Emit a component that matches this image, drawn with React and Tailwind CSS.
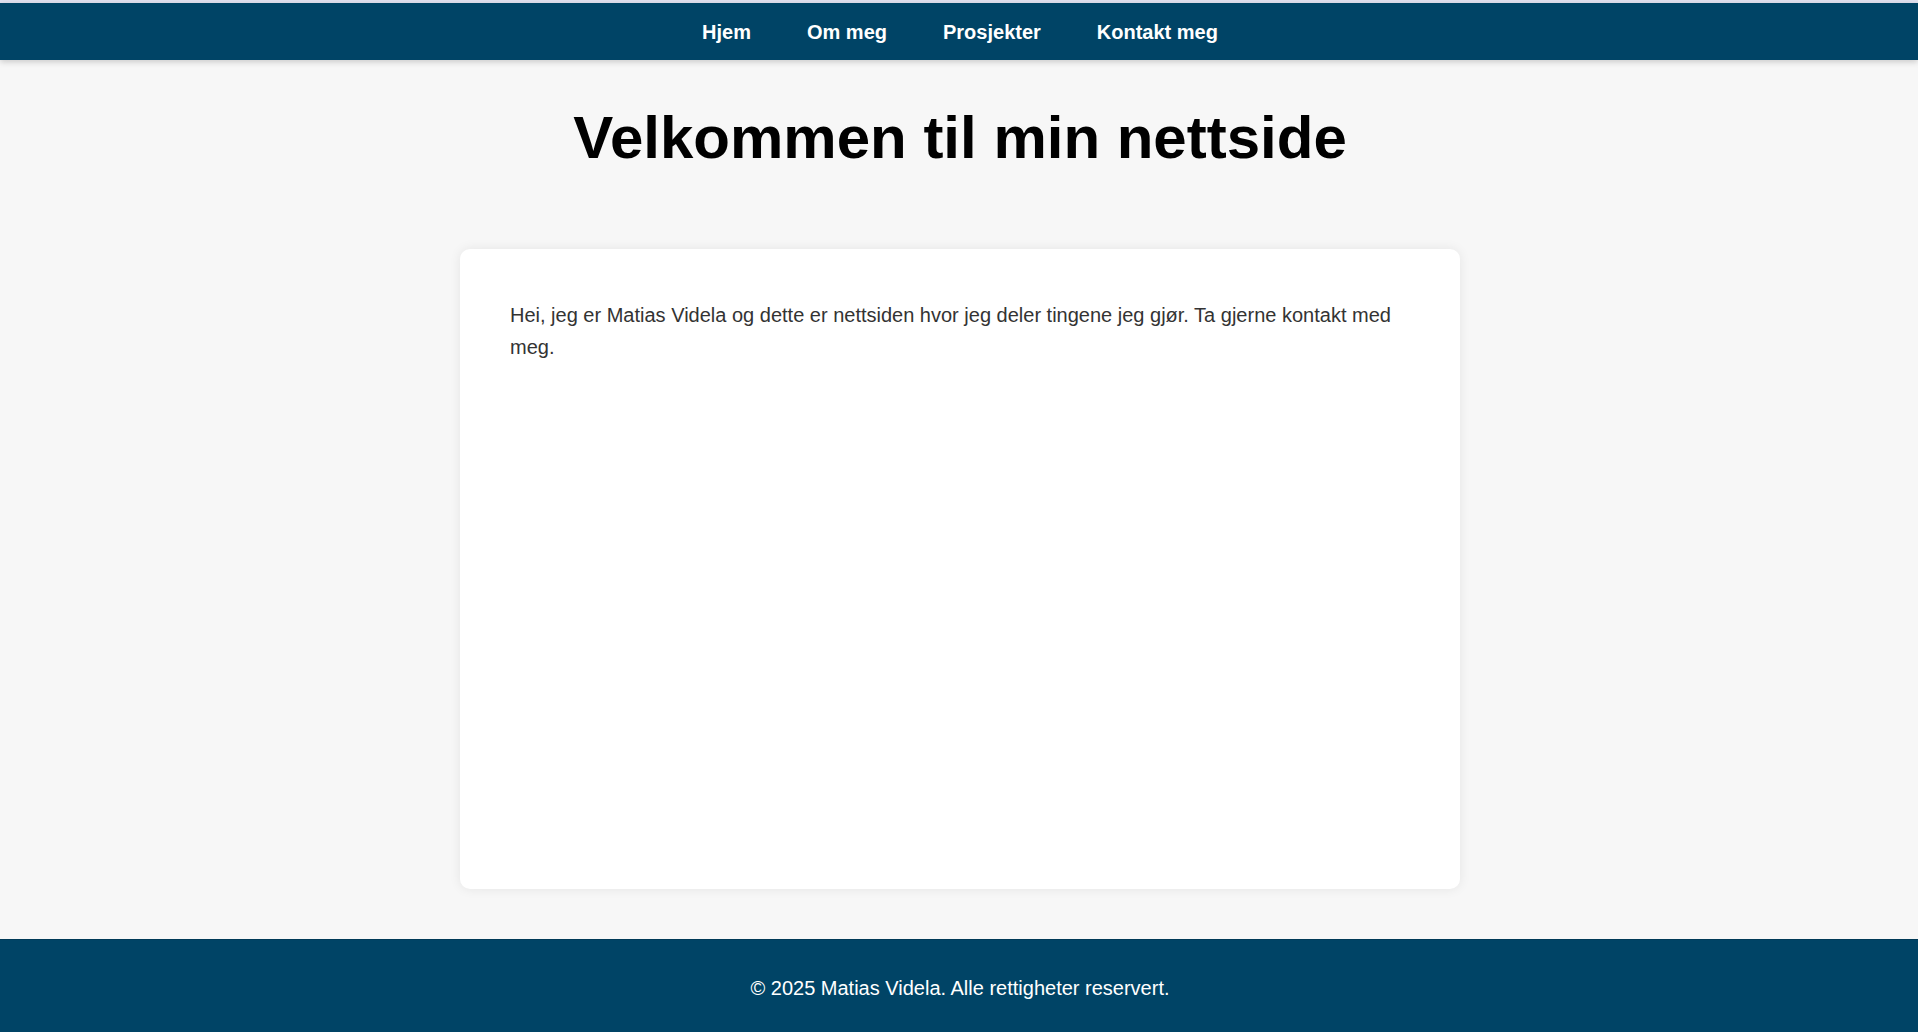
import React from "react";

export default function App() {
  const links = ["Hjem", "Om meg", "Prosjekter", "Kontakt meg"];
  return (
    <div
      className="min-h-[1032px] h-[1032px] overflow-hidden flex flex-col bg-[#f7f7f7]"
      style={{ fontFamily: '"Liberation Sans", Arial, sans-serif' }}
    >
      <div className="h-[3px] bg-[#e1e1ef]" />
      <nav className="relative z-10 h-[57px] pl-[2px] bg-[#004466] shadow-[0_2px_6px_rgba(0,0,0,0.18)] flex items-center justify-center gap-[56px]">
        {links.map((l) => (
          <a key={l} href="#" className="text-white font-bold text-[20px] leading-[24px] no-underline">
            {l}
          </a>
        ))}
      </nav>
      <main className="flex-1 flex flex-col items-center pl-[2px]">
        <h1 className="mt-[42px] text-[60px] leading-[72px] font-bold text-black">
          Velkommen til min nettside
        </h1>
        <section className="mt-[75px] w-[1000px] h-[640px] bg-white rounded-[10px] shadow-[0_0_12px_rgba(0,0,0,0.08)] px-[50px] pt-[50px]">
          <p className="text-[20px] leading-[32px] text-[#333333]">
            Hei, jeg er Matias Videla og dette er nettsiden hvor jeg deler tingene jeg gjør. Ta gjerne kontakt med meg.
          </p>
        </section>
      </main>
      <footer className="h-[93px] pl-[2px] bg-[#004466] border-t border-[#003a57] pt-[32px] text-center">
        <p className="text-white text-[20px] leading-[32px]">© 2025 Matias Videla. Alle rettigheter reservert.</p>
      </footer>
    </div>
  );
}
